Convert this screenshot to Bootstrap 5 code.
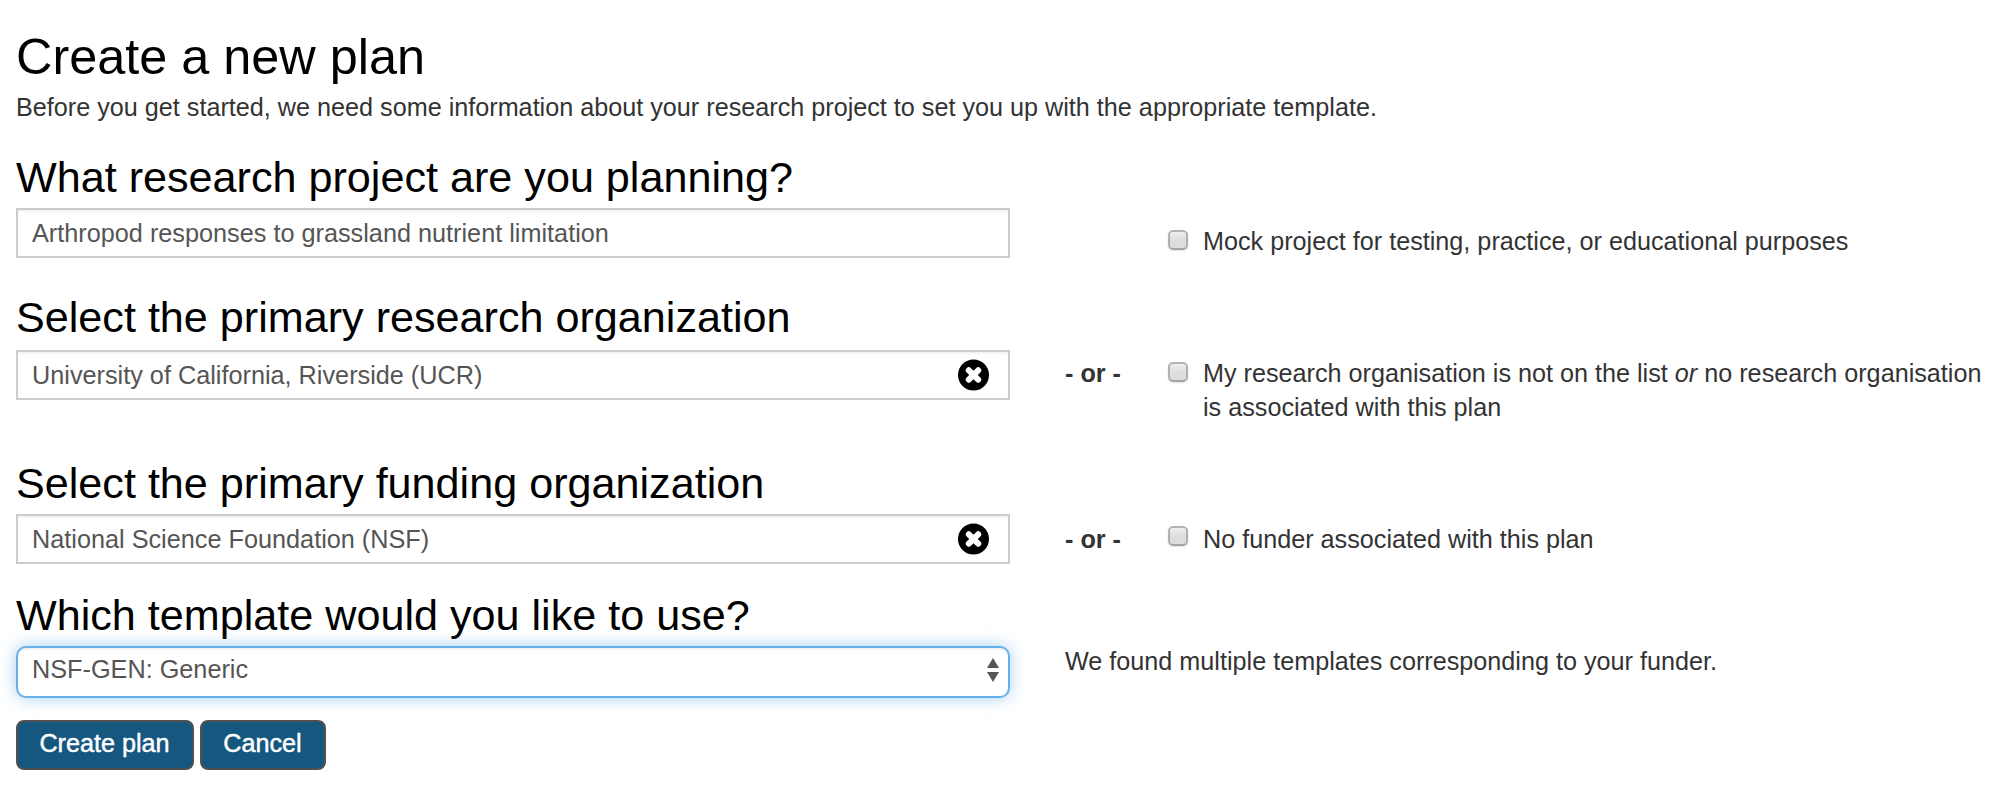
<!DOCTYPE html>
<html lang="en">
<head>
<meta charset="utf-8">
<title>Create a new plan</title>
<link href="https://cdn.jsdelivr.net/npm/bootstrap@5.3.0/dist/css/bootstrap.min.css" rel="stylesheet">
<style>
body{font:400 25.2px/34px "Liberation Sans",Arial,sans-serif;color:#333;background:#fff;overflow:hidden}
.plan-page{padding:29px 0 0 16px}
h1,h2{color:#000;font-weight:400;margin:0}
h1{font-size:50.4px;line-height:56px}
h2{font-size:43.15px;line-height:48px}
.intro{margin:5px 0 29px}
.plan-field{width:994px;margin-right:55px}
.side{flex:1;padding-top:var(--drop)}
.form-control,.form-select{font-size:25.25px;line-height:34px;height:50px;padding:0 14px;color:#555;border:2px solid #ccc;border-radius:0;box-shadow:inset 0 2px 2px rgba(0,0,0,.05)}
.form-select,.form-select:focus{height:52px;padding:0 14px 6px;border-color:#66afe9;border-radius:10px;background-image:none;box-shadow:inset 0 2px 2px rgba(0,0,0,.05),0 0 16px rgba(102,175,233,.6)}
.clear-icon{position:absolute;right:20px;top:9px}
.sort-icon{position:absolute;right:11px;top:12px}
.or-text{width:103px;font-weight:700}
.or-blank{width:103px}
.tick{appearance:none;width:20px;height:20px;flex:none;margin:var(--tick) 15px 0 0;border:2px solid #b0b0b0;border-top-color:#b5b5b5;border-bottom-color:#a3a3a3;border-radius:5px;background:linear-gradient(#f0f0f0,#dedede 50%,#dcdcdc);box-shadow:0 1px 2px rgba(0,0,0,.12)}
.btn-plan{height:50px;padding:0 21px 4px 20px;font-size:25.2px;line-height:34px;color:#fff;background:#15577f;border:2px solid #505050;border-radius:8px;-webkit-text-stroke:.45px #fff}
.btn-plan:hover{color:#fff;background:#104665}
</style>
</head>
<body>
<main class="plan-page">
  <h1>Create a new plan</h1>
  <p class="intro">Before you get started, we need some information about your research project to set you up with the appropriate template.</p>
  <form>
    <section style="height:140px">
      <h2 style="margin-bottom:7px">What research project are you planning?</h2>
      <div class="d-flex">
        <div class="plan-field"><input class="form-control" value="Arthropod responses to grassland nutrient limitation" aria-label="Project title"></div>
        <div class="side d-flex" style="--drop:16px;--tick:6px"><span class="or-blank"></span><input type="checkbox" class="tick" id="mock"><label for="mock">Mock project for testing, practice, or educational purposes</label></div>
      </div>
    </section>
    <section style="height:166px">
      <h2 style="margin-bottom:9px">Select the primary research organization</h2>
      <div class="d-flex">
        <div class="plan-field position-relative"><input class="form-control" value="University of California, Riverside (UCR)" aria-label="Research organization">
          <svg class="clear-icon" width="32" height="32" viewBox="0 0 32 32"><circle cx="15.5" cy="16" r="15.5"/><path d="M10.8 11.3l9.4 9.4M20.2 11.3l-9.4 9.4" stroke="#fff" stroke-width="6" stroke-linecap="round"/></svg></div>
        <div class="side d-flex" style="--drop:6px;--tick:6px"><span class="or-text">- or -</span><input type="checkbox" class="tick" id="noorg"><label for="noorg">My research organisation is not on the list <em>or</em> no research organisation<br>is associated with this plan</label></div>
      </div>
    </section>
    <section style="height:132px">
      <h2 style="margin-bottom:7px">Select the primary funding organization</h2>
      <div class="d-flex">
        <div class="plan-field position-relative"><input class="form-control" value="National Science Foundation (NSF)" aria-label="Funding organization">
          <svg class="clear-icon" width="32" height="32" viewBox="0 0 32 32"><circle cx="15.5" cy="16" r="15.5"/><path d="M10.8 11.3l9.4 9.4M20.2 11.3l-9.4 9.4" stroke="#fff" stroke-width="6" stroke-linecap="round"/></svg></div>
        <div class="side d-flex" style="--drop:8px;--tick:4px"><span class="or-text">- or -</span><input type="checkbox" class="tick" id="nofund"><label for="nofund">No funder associated with this plan</label></div>
      </div>
    </section>
    <section style="height:129px">
      <h2 style="margin-bottom:7px">Which template would you like to use?</h2>
      <div class="d-flex" style="height:52px">
        <div class="plan-field position-relative"><select class="form-select" aria-label="Template"><option>NSF-GEN: Generic</option></select>
          <svg class="sort-icon" width="12" height="24" viewBox="0 0 12 24" fill="#555"><path d="M0 10L6 0l6 10zM0 14h12L6 24z"/></svg></div>
        <div style="margin-top:-2px">We found multiple templates corresponding to your funder.</div>
      </div>
    </section>
    <div class="d-flex" style="gap:6px">
      <button type="button" class="btn btn-plan" style="width:178px">Create plan</button>
      <button type="button" class="btn btn-plan" style="width:126px">Cancel</button>
    </div>
  </form>
</main>
<script src="https://cdn.jsdelivr.net/npm/bootstrap@5.3.0/dist/js/bootstrap.bundle.min.js"></script>
</body>
</html>
